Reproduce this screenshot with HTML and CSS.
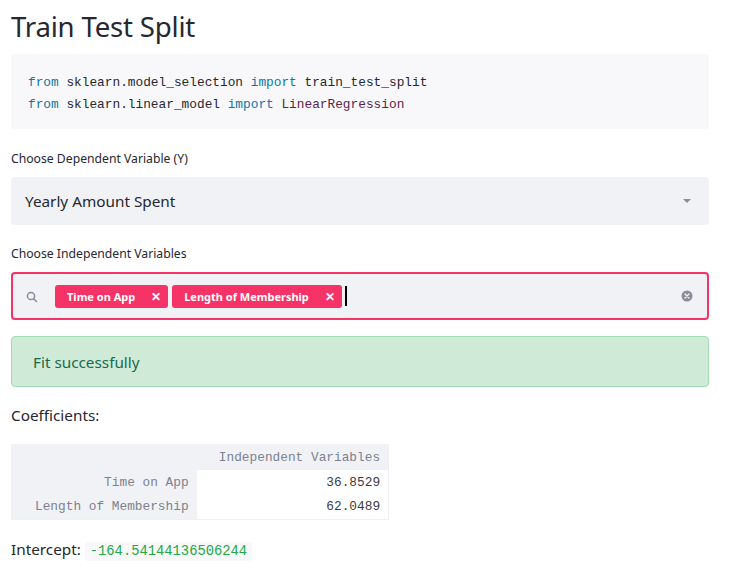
FILE: index.html
```html
<!DOCTYPE html>
<html>
<head>
<meta charset="utf-8">
<link rel="stylesheet" href="styles.css">
</head>
<body>
<main class="page">
  <h1 class="title">Train Test Split</h1>
  <pre class="code"><span class="kw">from</span> sklearn.model_selection <span class="kw">import</span> train_test_split
<span class="kw">from</span> sklearn.linear_model <span class="kw">import</span> <span class="cls">LinearRegression</span></pre>

  <label class="label label-first">Choose Dependent Variable (Y)</label>
  <div class="select">
    <span class="select-value">Yearly Amount Spent</span>
    <svg class="caret" width="10" height="6" viewBox="0 0 10 6"><path d="M1 1 L9 1 L5 5 Z" fill="#8a8d98"/></svg>
  </div>

  <label class="label label-second">Choose Independent Variables</label>
  <div class="multi">
    <svg class="search" width="12" height="12" viewBox="0 0 12 12"><circle cx="5" cy="5" r="3.6" fill="none" stroke="#8a8d98" stroke-width="1.5"/><path d="M7.7 7.7 L10.5 10.5" stroke="#8a8d98" stroke-width="1.6" stroke-linecap="round"/></svg>
    <span class="tag">Time on App<span class="x">✕</span></span>
    <span class="tag">Length of Membership<span class="x">✕</span></span>
    <span class="cursor"></span>
    <svg class="clear" width="12" height="12" viewBox="0 0 12 12"><circle cx="6" cy="6" r="5.5" fill="#8a8d98"/><path d="M4 4 L8 8 M8 4 L4 8" stroke="#f0f2f6" stroke-width="1.4" stroke-linecap="round"/></svg>
  </div>

  <div class="success">Fit successfully</div>

  <p class="coef">Coefficients:</p>

  <table class="df">
    <thead>
      <tr><th class="blank"></th><th class="col">Independent Variables</th></tr>
    </thead>
    <tbody>
      <tr><th class="idx">Time on App</th><td>36.8529</td></tr>
      <tr><th class="idx">Length of Membership</th><td>62.0489</td></tr>
    </tbody>
  </table>

  <p class="intercept">Intercept: <code class="inline">-164.54144136506244</code></p>
</main>
</body>
</html>
```

FILE: styles.css
```css
* { box-sizing: border-box; }
html, body { margin: 0; padding: 0; background: #ffffff; }
body {
  font-family: "Noto Sans", "Open Sans", sans-serif;
  color: #262730;
}
.page {
  width: 698px;
  margin-left: 11px;
  display: flex;
  flex-direction: column;
  align-items: stretch;
}
.title {
  margin: 4px 0 0 0;
  font-size: 27.6px;
  font-weight: 400;
  line-height: 44px;
  letter-spacing: -0.2px;
}
.code {
  margin: 6px 0 0 0;
  background: #f8f8fa;
  border-radius: 4px;
  padding: 18px 17px 13px 17px;
  font-family: "Liberation Mono", "DejaVu Sans Mono", monospace;
  font-size: 12.8px;
  line-height: 22px;
  color: #262730;
}
.kw { color: #0779a8; }
.cls { color: #5c1f4a; }
.label {
  display: block;
  font-size: 12.2px;
  line-height: 18px;
  color: #262730;
}
.label-first { margin-top: 21px; }
.label-second { margin-top: 20px; }
.select {
  margin-top: 9px;
  height: 48px;
  background: #f0f2f6;
  border-radius: 4px;
  display: flex;
  align-items: center;
  padding: 0 17px 0 14px;
}
.select-value {
  flex: 1;
  font-size: 15.3px;
}
.caret { display: block; }
.multi {
  margin-top: 9px;
  height: 48px;
  background: #f0f2f6;
  border: 2px solid #f63366;
  border-radius: 4px;
  display: flex;
  align-items: center;
  padding: 0 14px 0 13px;
}
.search { margin-right: 17px; margin-top: 2px; }
.tag {
  display: flex;
  align-items: center;
  height: 23px;
  background: #f63366;
  color: #ffffff;
  border-radius: 3px;
  font-size: 11px;
  font-weight: 700;
  padding: 0 7px 0 12px;
  margin-right: 4px;
}
.x {
  margin-left: 16px;
  font-size: 12px;
  font-weight: 700;
}
.cursor {
  width: 2px;
  height: 20px;
  background: #000;
  margin-left: -1px;
  flex: none;
}
.clear { margin-left: auto; }
.success {
  margin-top: 16px;
  height: 51px;
  background: #cfebd8;
  border: 1px solid #a3dcb3;
  border-radius: 4px;
  color: #19694a;
  font-size: 15.3px;
  padding: 0 21px;
  display: flex;
  align-items: center;
}
.coef {
  margin: 17px 0 0 0;
  font-size: 15.3px;
  line-height: 22px;
}
.df {
  margin-top: 18px;
  border-collapse: collapse;
  font-family: "Liberation Mono", "DejaVu Sans Mono", monospace;
  font-size: 12.8px;
  align-self: flex-start;
  border: 1px solid #eef0f4;
}
.df th, .df td {
  height: 25px;
  padding: 0 8px 0 8px;
  text-align: right;
  font-weight: 400;
  white-space: nowrap;
}
.df thead th { background: #f0f2f6; color: #7d8190; }
.df .idx { background: #f0f2f6; color: #7d8190; padding-left: 23px; }
.df .col { width: 192px; }
.df td { background: #ffffff; color: #3a3b44; }
.intercept {
  margin: 17px 0 0 0;
  font-size: 15.3px;
  line-height: 24px;
}
.inline {
  font-family: "Liberation Mono", "DejaVu Sans Mono", monospace;
  font-size: 13.8px;
  color: #22a845;
  background: #f8f8fa;
  border-radius: 3px;
  padding: 2px 5px;
}
```
